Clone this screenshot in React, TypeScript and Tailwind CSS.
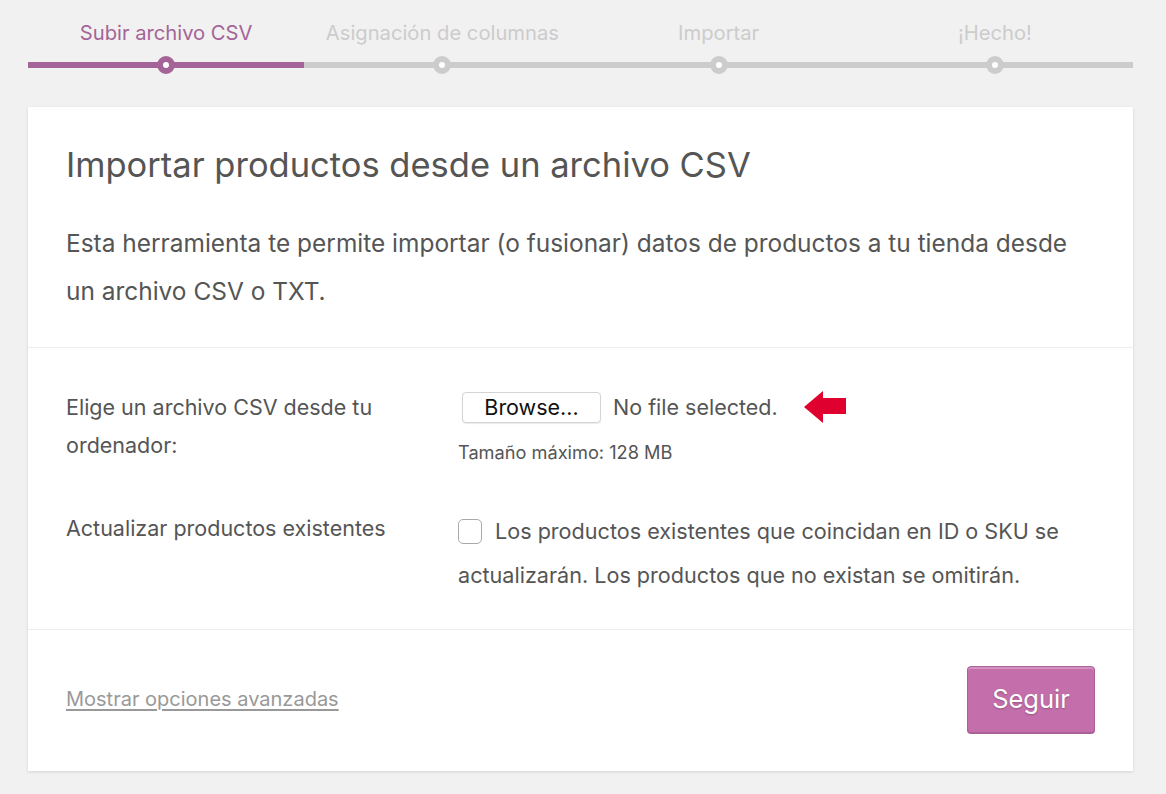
import React from "react";

const steps = ["Subir archivo CSV", "Asignación de columnas", "Importar", "¡Hecho!"];

export default function App() {
  return (
    <div
      className="min-h-[794px] w-full bg-[#f1f1f1] pl-[28px] pr-[33px] text-[#555]"
      style={{ fontFamily: "Inter, 'Noto Sans', sans-serif" }}
    >
      {/* Stepper */}
      <div className="grid grid-cols-4 pt-[20px]">
        {steps.map((s, i) => {
          const active = i === 0;
          return (
            <div key={s} className="flex flex-col items-center">
              <div
                className={`h-[26px] text-[20.2px] leading-[26px] ${active ? "text-[#a46497]" : "text-[#ccc]"}`}
              >
                {s}
              </div>
              <div className="relative mt-[14px] h-[10px] w-full">
                <div
                  className={`absolute left-0 right-0 top-[2px] h-[6px] ${active ? "bg-[#a46497]" : "bg-[#ccc]"}`}
                />
                <div
                  className={`absolute left-1/2 top-[-4px] h-[18px] w-[18px] -translate-x-1/2 rounded-full border-[6px] bg-white ${active ? "border-[#a46497]" : "border-[#ccc]"}`}
                />
              </div>
            </div>
          );
        })}
      </div>

      {/* Card */}
      <div className="mt-[37px] bg-white shadow-[0_1px_3px_rgba(0,0,0,0.13)]">
        <div className="px-[38px] pb-[32px] pt-[36px]">
          <h1 className="text-[34.5px] leading-[44px] font-normal text-[#555]">
            Importar productos desde un archivo CSV
          </h1>
          <p className="mt-[32px] whitespace-nowrap text-[24.45px] leading-[48px] text-[#555]">
            Esta herramienta te permite importar (o fusionar) datos de productos a tu tienda desde
            <br />
            un archivo CSV o TXT.
          </p>
        </div>
        <div className="border-t border-[#eee] px-[38px] pb-[32px] pt-[40px]">
          <div className="flex">
            <div className="w-[392px] shrink-0 text-[21.5px] leading-[38px]">
              Elige un archivo CSV desde tu
              <br />
              ordenador:
            </div>
            <div className="flex flex-col">
              <div className="flex h-[38px] items-center">
                <div className="ml-[4px] flex h-[31px] w-[139px] items-center justify-center rounded-[4px] border border-[#d4d4d4] bg-white text-[21.5px] text-[#111] shadow-[0_1px_1px_rgba(0,0,0,0.08)]">
                  Browse...
                </div>
                <span className="ml-[12px] text-[21.5px] text-[#555]">No file selected.</span>
                <svg className="ml-[26px]" width="43" height="32" viewBox="0 0 43 32">
                  <polygon points="0,16 19,0 19,7 42,7 42,23 19,23 19,32" fill="#e0002f" />
                </svg>
              </div>
              <div className="mt-[14px] text-[18.2px] leading-[24px] text-[#555]">Tamaño máximo: 128 MB</div>
            </div>
          </div>
          <div className="mt-[45px] flex">
            <div className="w-[392px] shrink-0 text-[21.5px] leading-[38px]">Actualizar productos existentes</div>
            <div className="whitespace-nowrap text-[21.6px] leading-[44px] text-[#555]">
              <span className="relative top-[5px] mr-[13px] inline-block h-[25px] w-[24px] rounded-[5px] border border-[#aaa] bg-white" />
              Los productos existentes que coincidan en ID o SKU se
              <br />
              actualizarán. Los productos que no existan se omitirán.
            </div>
          </div>
        </div>
        <div className="flex items-center justify-between border-t border-[#eee] px-[38px] pb-[38px] pt-[36px]">
          <a className="-mt-[2px] text-[20px] text-[#999] underline underline-offset-[3px] decoration-[#999]">
            Mostrar opciones avanzadas
          </a>
          <button className="h-[67px] w-[128px] rounded-[4px] border border-[#ad5f97] bg-[#c46fab] text-[25.5px] text-white shadow-[inset_0_2px_0_rgba(255,255,255,0.25),0_1px_0_#ad5f97] [text-shadow:0_1px_2px_rgba(0,0,0,0.25)]">
            Seguir
          </button>
        </div>
      </div>
    </div>
  );
}
